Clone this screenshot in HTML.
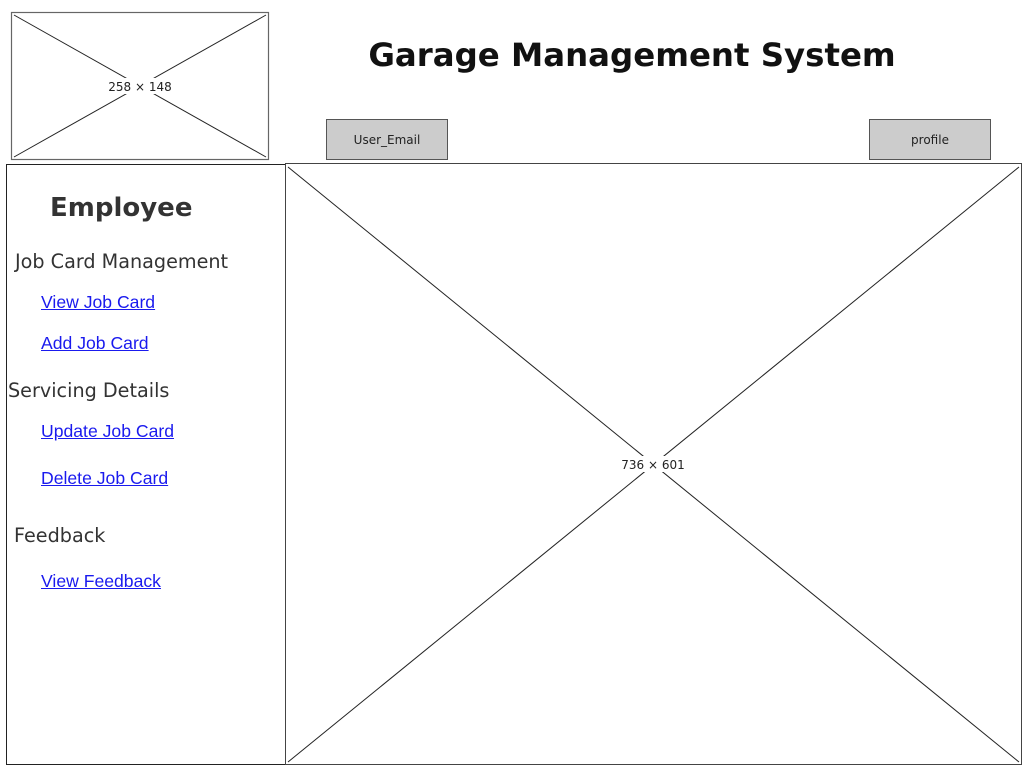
<!DOCTYPE html>
<html><head><meta charset="utf-8"><style>
body{margin:0;width:1024px;height:768px;background:#fff;position:relative;overflow:hidden;font-family:"DejaVu Sans","Liberation Sans",sans-serif;}
.a{position:absolute;}
.btn{position:absolute;background:#ccc;border:1px solid #555;box-sizing:border-box;font-size:12px;text-align:center;color:#222;}
.l{position:absolute;color:#1a1aee;text-decoration:underline;font-family:"Liberation Sans",sans-serif;font-size:17.6px;}
.h{position:absolute;color:#333;font-size:19.2px;}
</style></head><body>
<svg class="a" style="left:0;top:0" width="1024" height="768">
<rect x="11.5" y="12.5" width="257" height="147" fill="none" stroke="#666" stroke-width="1.2"/>
<line x1="14" y1="15" x2="266" y2="157" stroke="#222"/>
<line x1="266" y1="15" x2="14" y2="157" stroke="#222"/>
<rect x="110" y="78" width="60" height="16" fill="#fff"/>
<text x="140" y="91" font-size="12" text-anchor="middle" fill="#222" font-family="DejaVu Sans,sans-serif">258 × 148</text>
<rect x="6.5" y="164.5" width="279" height="600" fill="none" stroke="#222"/>
<rect x="285.5" y="163.5" width="736" height="601" fill="none" stroke="#444"/>
<line x1="288" y1="167" x2="1019" y2="762" stroke="#222"/>
<line x1="1019" y1="167" x2="288" y2="762" stroke="#222"/>
<rect x="622" y="456" width="62" height="16" fill="#fff"/>
<text x="653" y="469" font-size="12" text-anchor="middle" fill="#222" font-family="DejaVu Sans,sans-serif">736 × 601</text>
</svg>
<div class="a" style="left:300px;top:36px;width:664px;text-align:center;font-size:32.4px;font-weight:bold;color:#111;">Garage Management System</div>
<div class="btn" style="left:326px;top:119px;width:122px;height:41px;line-height:41px;">User_Email</div>
<div class="btn" style="left:869px;top:119px;width:122px;height:41px;line-height:41px;">profile</div>
<div class="a" style="left:50px;top:193px;font-size:26px;font-weight:bold;color:#333;">Employee</div>
<div class="h" style="left:15px;top:250px;">Job Card Management</div>
<a class="l" style="left:41px;top:292px;">View Job Card</a>
<a class="l" style="left:41px;top:333px;">Add Job Card</a>
<div class="h" style="left:8px;top:379px;">Servicing Details</div>
<a class="l" style="left:41px;top:421px;">Update Job Card</a>
<a class="l" style="left:41px;top:468px;">Delete Job Card</a>
<div class="h" style="left:14px;top:524px;">Feedback</div>
<a class="l" style="left:41px;top:571px;">View Feedback</a>
</body></html>
